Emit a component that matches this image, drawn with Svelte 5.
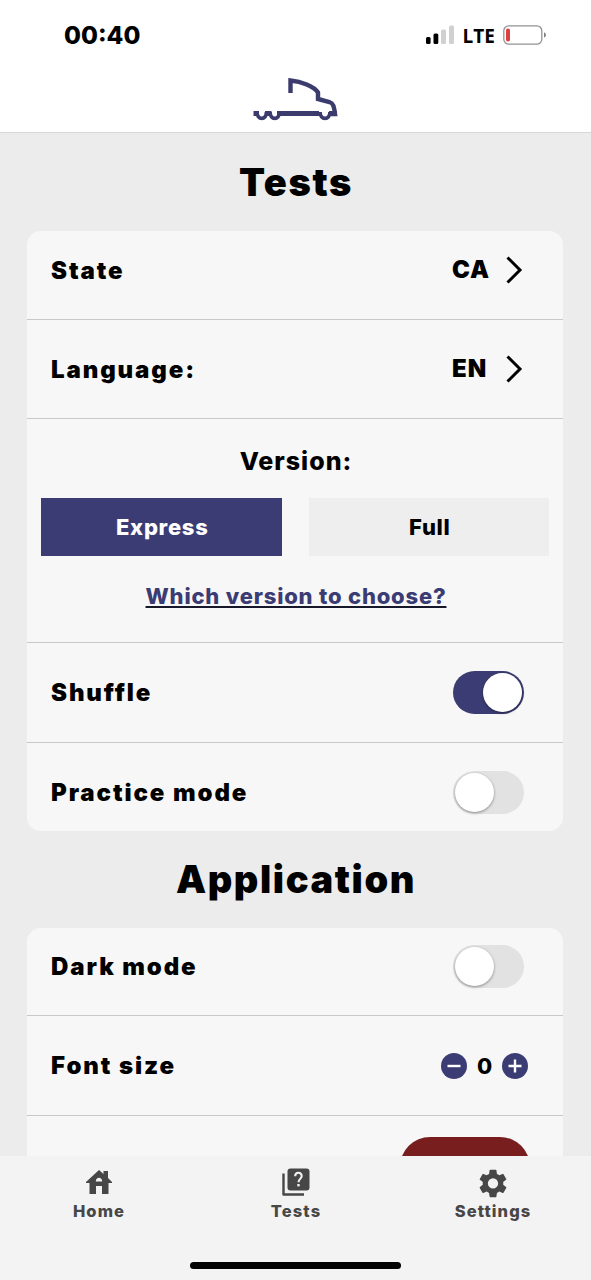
<script lang="ts">
	let version = 'Express';
	let shuffle = true;
	let practice = false;
	let dark = false;
	let fontSize = 0;

	const versions = ['Express', 'Full'];
	const pickers = [
		{ label: 'State', value: 'CA' },
		{ label: 'Language:', value: 'EN' }
	];
</script>

<div class="screen">
	<header>
		<div class="status">
			<span class="time">00:40</span>
			<div class="indicators">
				<svg class="signal" width="30" height="20" viewBox="0 0 30 20">
					<rect x="0" y="12" width="4.6" height="7" rx="1.5" />
					<rect x="7.5" y="8.5" width="4.8" height="10.5" rx="1.5" />
					<rect x="15" y="4.5" width="5" height="14.5" rx="1.5" fill="#d0d0d0" />
					<rect x="23" y="0.5" width="5" height="18.5" rx="1.5" fill="#d0d0d0" />
				</svg>
				<span class="network">LTE</span>
				<svg class="battery" width="44" height="20" viewBox="0 0 44 20">
					<rect x="0.8" y="0.8" width="38" height="18.4" rx="5" fill="none" stroke="#929292" stroke-width="1.3" />
					<rect x="3" y="3.5" width="4" height="13" rx="1.8" fill="#dc4040" />
					<path d="M41 7.2q2 1 2 2.8t-2 2.8z" fill="#808080" />
				</svg>
			</div>
		</div>
		<svg class="logo" width="86" height="44" viewBox="0 0 86 44" fill="none" stroke="#3b3b6e">
			<path d="M37.500 16V3.5C48 4.500 61 9 65 15.500V22L76.500 25C80 26 81 29 82 37H78" stroke-width="4.4" />
			<path d="M0.500 36.500H6M12 36.500H18.500M24 36.500H66M76 36.500H84" stroke-width="4.800" />
			<path d="M4 35C4 43.500 13.500 43.500 13.500 35M17 35C17 43.500 26.500 43.500 26.500 35M67 35C67 43.500 77 43.500 77 35" stroke-width="3.800" />
		</svg>
	</header>

	<main>
		<h1>Tests</h1>
		<section class="card">
			{#each pickers as picker}
				<div class="row">
					<span class="label">{picker.label}</span>
					<button class="picker">
						<span>{picker.value}</span>
						<svg width="18" height="28" viewBox="0 0 18 28">
							<path d="M1.500 1.500L14 14L1.500 26.500" fill="none" stroke="#000" stroke-width="3" />
						</svg>
					</button>
				</div>
			{/each}
			<div class="version">
				<h2>Version:</h2>
				<div class="options">
					{#each versions as name}
						<button class:active={version === name} on:click={() => (version = name)}>{name}</button>
					{/each}
				</div>
				<a href="#versions">Which version to choose?</a>
			</div>
			<div class="row">
				<span class="label">Shuffle</span>
				<button class="switch" class:on={shuffle} aria-label="Shuffle" on:click={() => (shuffle = !shuffle)}>
					<span class="knob"></span>
				</button>
			</div>
			<div class="row last">
				<span class="label">Practice mode</span>
				<button class="switch" class:on={practice} aria-label="Practice mode" on:click={() => (practice = !practice)}>
					<span class="knob"></span>
				</button>
			</div>
		</section>

		<h1>Application</h1>
		<section class="card">
			<div class="row">
				<span class="label">Dark mode</span>
				<button class="switch" class:on={dark} aria-label="Dark mode" on:click={() => (dark = !dark)}>
					<span class="knob"></span>
				</button>
			</div>
			<div class="row">
				<span class="label">Font size</span>
				<div class="stepper">
					<button aria-label="Smaller" on:click={() => fontSize--}>
						<svg width="26" height="26" viewBox="0 0 26 26"><path d="M6.500 13H19.500" /></svg>
					</button>
					<span>{fontSize}</span>
					<button aria-label="Larger" on:click={() => fontSize++}>
						<svg width="26" height="26" viewBox="0 0 26 26"><path d="M6.500 13H19.500M13 6.500V19.500" /></svg>
					</button>
				</div>
			</div>
			<div class="reset-row">
				<button class="reset" aria-label="Reset"></button>
			</div>
		</section>
	</main>

	<footer>
		<nav>
			<a href="#home">
				<svg width="28" height="28" viewBox="0 0 28 28" fill="#474747">
					<path fill-rule="evenodd" d="M14 2L18.500 6V3H23V10L27 14V15H23.500V26H17V18H11V26H4.500V15H1V14ZM10.800 13.500H17.200C17.200 8.500 10.800 8.500 10.800 13.500Z" />
				</svg>
				<span>Home</span>
			</a>
			<a href="#tests">
				<svg width="28" height="28" viewBox="0 0 28 28" fill="#474747">
					<rect x="5.500" y="0.500" width="22" height="22" rx="3" />
					<path d="M1.500 5.500V26.500H22" fill="none" stroke="#474747" stroke-width="2.400" stroke-linejoin="round" />
					<path d="M13.200 8.300C13.200 3.600 19.700 3.800 19.700 8C19.700 10.800 16.500 11 16.500 14.200" fill="none" stroke="#f3f3f3" stroke-width="2.100" />
					<rect x="15.300" y="16" width="2.400" height="2.400" fill="#f3f3f3" />
				</svg>
				<span>Tests</span>
			</a>
			<a href="#settings">
				<svg width="32" height="30" viewBox="1 1.200 22 21" fill="#474747">
					<path d="M19.140 12.940c.04-.3.060-.610.060-.940s-.020-.640-.070-.940l2.030-1.580a.49.49 0 0 0 .12-.610l-1.920-3.320a.488.488 0 0 0-.590-.220l-2.390.960c-.5-.380-1.030-.7-1.620-.940l-.360-2.540A.484.484 0 0 0 13.920 2.400h-3.840c-.240 0-.430.170-.470.410l-.360 2.540c-.590.240-1.130.570-1.620.940l-2.390-.960a.48.48 0 0 0-.590.220L2.740 8.870c-.120.210-.080.470.120.610l2.030 1.580c-.050.3-.090.630-.090.940s.020.640.070.940l-2.030 1.580a.49.49 0 0 0-.120.610l1.920 3.320c.120.220.370.290.590.220l2.390-.960c.5.380 1.030.7 1.620.940l.360 2.540c.050.240.240.410.480.410h3.840c.240 0 .440-.170.470-.410l.360-2.540c.590-.240 1.130-.560 1.620-.940l2.390.960c.220.080.470 0 .590-.220l1.920-3.320a.48.48 0 0 0-.120-.610zM12 15.600A3.600 3.600 0 1 1 12 8.400a3.600 3.600 0 0 1 0 7.200z" />
				</svg>
				<span>Settings</span>
			</a>
		</nav>
		<div class="home-indicator"></div>
	</footer>
</div>

<style>
	.screen {
		height: 1280px;
		display: flex;
		flex-direction: column;
		overflow: hidden;
		font-family: Inter, sans-serif;
		font-weight: 900;
		color: #000;
		background: #ececec;
	}

	button {
		padding: 0;
		border: none;
		background: none;
		font: inherit;
		color: inherit;
		cursor: pointer;
	}

	svg {
		display: block;
	}

	header {
		height: 132px;
		margin-bottom: 1px;
		flex-shrink: 0;
		display: flex;
		flex-direction: column;
		align-items: center;
		background: #fff;
		border-bottom: 1px solid #d8d8d8;
	}

	.status {
		width: 100%;
		height: 70px;
		box-sizing: border-box;
		padding: 0 44px 0 64px;
		display: flex;
		align-items: center;
		justify-content: space-between;
	}

	.time {
		font-size: 24.500px;
		font-weight: 800;
	}

	.indicators {
		display: flex;
		align-items: center;
	}

	.network {
		margin: 1px 8px 0 7px;
		font-family: 'Open Sans', sans-serif;
		font-size: 19px;
		font-weight: 700;
	}

	.logo {
		margin-top: 7px;
	}

	main {
		flex: 1;
		min-height: 0;
		overflow: hidden;
		padding: 0 28px 0 27px;
	}

	h1 {
		height: 97px;
		margin: 0;
		padding-left: 2px;
		line-height: 97px;
		font-size: 38px;
		font-weight: 900;
		letter-spacing: 1.600px;
		text-align: center;
	}

	.card {
		border-radius: 14px;
		background: #f7f7f7;
	}

	.row {
		height: 99.500px;
		box-sizing: border-box;
		padding: 0 39px 0 24px;
		display: flex;
		align-items: center;
		justify-content: space-between;
		border-bottom: 1.500px solid #c8c8c8;
	}

	.row:first-child {
		height: 88.500px;
		padding-bottom: 10px;
	}

	.row.last {
		height: 88px;
		padding-top: 11px;
		border-bottom: none;
	}

	.label {
		padding-top: 1px;
		font-size: 24px;
		letter-spacing: 1.900px;
	}

	.picker {
		width: 72px;
		display: flex;
		align-items: center;
		justify-content: space-between;
		font-size: 24px;
		letter-spacing: 1px;
	}

	.version {
		height: 224px;
		box-sizing: border-box;
		padding: 27px 14px 0;
		display: flex;
		flex-direction: column;
		align-items: center;
		border-bottom: 1.500px solid #c8c8c8;
	}

	h2 {
		margin: 0 0 21px;
		padding-left: 2px;
		line-height: 31px;
		font-size: 25px;
		font-weight: 800;
		letter-spacing: 1px;
	}

	.options {
		width: 100%;
		display: flex;
		gap: 27px;
	}

	.options button {
		flex: 1;
		height: 58px;
		padding-left: 2px;
		background: #eee;
		font-size: 22px;
		font-weight: 800;
		letter-spacing: 0.700px;
	}

	.options button.active {
		background: #3b3c73;
		color: #fff;
	}

	.version a {
		margin: 26px 0 0 2px;
		line-height: 28px;
		font-size: 22px;
		font-weight: 800;
		letter-spacing: 0.800px;
		color: #3b3c73;
		text-decoration: underline #17172c 2px;
		text-underline-offset: 2px;
		text-decoration-skip-ink: none;
	}

	.switch {
		width: 71px;
		height: 43px;
		box-sizing: border-box;
		padding: 2px;
		display: flex;
		border-radius: 22px;
		background: #e2e2e2;
	}

	.switch .knob {
		width: 39px;
		height: 39px;
		border-radius: 50%;
		background: #fff;
		box-shadow: 0 1px 3px rgba(0, 0, 0, 0.4);
	}

	.switch.on {
		justify-content: flex-end;
		background: #3b3c73;
	}

	.stepper {
		display: flex;
		align-items: center;
		gap: 10px;
		margin-right: -4px;
		padding-top: 1px;
		font-size: 22px;
		font-weight: 800;
	}

	.stepper span {
		width: 15px;
		text-align: center;
	}

	.stepper button {
		border-radius: 50%;
		background: #3b3c73;
	}

	.stepper path {
		stroke: #fff;
		stroke-width: 2.400;
	}

	.reset-row {
		height: 100px;
		padding: 21px 33px 0 0;
		display: flex;
		justify-content: flex-end;
	}

	.reset {
		width: 130px;
		height: 60px;
		border-radius: 30px;
		background: #781e1e;
	}

	footer {
		height: 124px;
		flex-shrink: 0;
		display: flex;
		flex-direction: column;
		align-items: center;
		justify-content: space-between;
		background: #f3f3f3;
	}

	nav {
		width: 100%;
		display: flex;
		padding-top: 12px;
	}

	nav a {
		flex: 1;
		height: 54px;
		display: flex;
		flex-direction: column;
		align-items: center;
		text-decoration: none;
		font-size: 16.500px;
		font-weight: 800;
		line-height: 22px;
		letter-spacing: 1.100px;
		color: #474747;
	}

	nav span {
		margin-top: auto;
		padding-left: 1px;
	}

	.home-indicator {
		width: 211px;
		height: 7px;
		margin-bottom: 11px;
		border-radius: 4px;
		background: #000;
	}
</style>
